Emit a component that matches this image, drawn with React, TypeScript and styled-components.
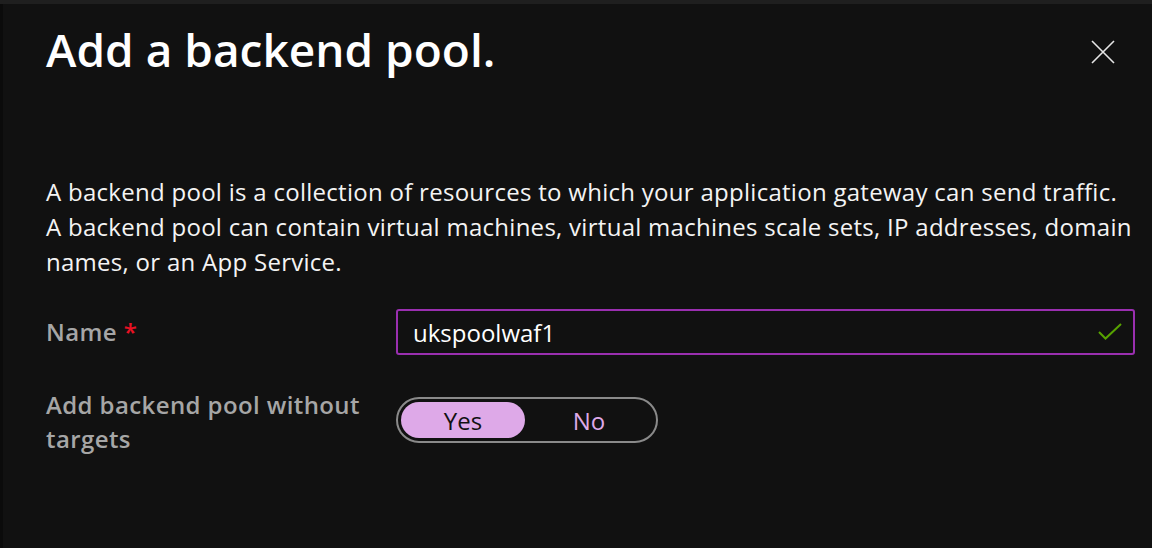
import React, { useState } from 'react';
import styled, { createGlobalStyle } from 'styled-components';

const GlobalStyle = createGlobalStyle`
  html, body {
    margin: 0;
    padding: 0;
    background: #111111;
  }
  body {
    font-family: 'Open Sans', 'Noto Sans', sans-serif;
    -webkit-font-smoothing: antialiased;
  }
`;

function App() {
  const [name, setName] = useState('ukspoolwaf1');
  const [withoutTargets, setWithoutTargets] = useState(true);

  return (
    <>
      <GlobalStyle />
      <Page>
        <TopStrip />
        <Body>
          <SideStrip />
          <Panel>
            <Header>
              <Title>Add a backend pool.</Title>
              <CloseButton aria-label="Close">
                <svg width="24" height="24" viewBox="0 0 24 24">
                  <path d="M1 1 L23 23 M23 1 L1 23" stroke="#e6e6e6" strokeWidth="1.6" fill="none" />
                </svg>
              </CloseButton>
            </Header>

            <Description>
              A backend pool is a collection of resources to which your application gateway can send traffic.
              <br />
              A backend pool can contain virtual machines, virtual machines scale sets, IP addresses, domain
              <br />
              names, or an App Service.
            </Description>

            <Form>
              <Label $center>
                Name <Required>*</Required>
              </Label>
              <InputBox>
                <TextInput value={name} onChange={(e) => setName(e.target.value)} />
                <CheckIcon width="24" height="18" viewBox="0 0 24 18">
                  <path d="M1 9 L7.5 15.5 L23 1" stroke="#57a300" strokeWidth="2" fill="none" />
                </CheckIcon>
              </InputBox>

              <Label>Add backend pool without targets</Label>
              <Toggle>
                <ToggleOption $active={withoutTargets} onClick={() => setWithoutTargets(true)}>
                  Yes
                </ToggleOption>
                <ToggleOption $active={!withoutTargets} onClick={() => setWithoutTargets(false)}>
                  No
                </ToggleOption>
              </Toggle>
            </Form>
          </Panel>
        </Body>
      </Page>
    </>
  );
}

export default App;

const Page = styled.div`
  width: 1152px;
  height: 548px;
  display: flex;
  flex-direction: column;
  background: #111111;
  overflow: hidden;
`;
const TopStrip = styled.div`
  height: 4px;
  background: #1f1f1f;
  flex-shrink: 0;
`;
const Body = styled.div`
  flex: 1;
  display: flex;
`;
const SideStrip = styled.div`
  width: 3px;
  background: #0b0b0b;
`;
const Panel = styled.div`
  flex: 1;
  padding: 0 17px 0 43px;
  display: flex;
  flex-direction: column;
`;
const Header = styled.div`
  display: flex;
  justify-content: space-between;
  align-items: flex-start;
  height: 170px;
`;
const Title = styled.h1`
  margin: 15px 0 0;
  font-size: 46px;
  font-weight: 600;
  line-height: 60px;
  color: #ffffff;
`;
const CloseButton = styled.button`
  margin-top: 36px;
  margin-right: 20px;
  width: 24px;
  height: 24px;
  padding: 0;
  border: none;
  background: transparent;
  cursor: pointer;
  display: flex;
`;
const Description = styled.p`
  margin: 0;
  font-size: 24px;
  line-height: 35px;
  color: #f4f4f4;
  letter-spacing: 0.28px;
  white-space: nowrap;
`;
const Form = styled.div`
  margin-top: 30px;
  display: grid;
  grid-template-columns: 350px 739px;
  row-gap: 33px;
  align-items: start;
`;
const Label = styled.div<{ $center?: boolean }>`
  align-self: ${(p) => (p.$center ? 'center' : 'start')};
  font-size: 24px;
  font-weight: 600;
  line-height: 34px;
  letter-spacing: 0.4px;
  color: #a6a6a6;
  max-width: 330px;
`;
const Required = styled.span`
  color: #e81123;
`;
const InputBox = styled.div`
  height: 46px;
  box-sizing: border-box;
  border: 2px solid #9a2fb0;
  border-radius: 3px;
  display: flex;
  align-items: center;
  padding: 0 11px 0 15px;
`;
const TextInput = styled.input`
  flex: 1;
  background: transparent;
  border: none;
  outline: none;
  color: #ffffff;
  font-family: inherit;
  font-size: 24px;
  padding: 0;
`;
const CheckIcon = styled.svg`
  flex-shrink: 0;
`;
const Toggle = styled.div`
  margin-top: 9px;
  width: 262px;
  height: 46px;
  box-sizing: border-box;
  border: 2px solid #8a8a8a;
  border-radius: 23px;
  padding: 3px;
  display: grid;
  grid-template-columns: 124px 1fr;
`;
const ToggleOption = styled.button<{ $active: boolean }>`
  border: none;
  border-radius: 18px;
  background: ${(p) => (p.$active ? '#dea9e8' : 'transparent')};
  color: ${(p) => (p.$active ? '#111111' : '#dea9e8')};
  font-family: inherit;
  font-size: 24px;
  padding: 0;
  cursor: pointer;
`;
